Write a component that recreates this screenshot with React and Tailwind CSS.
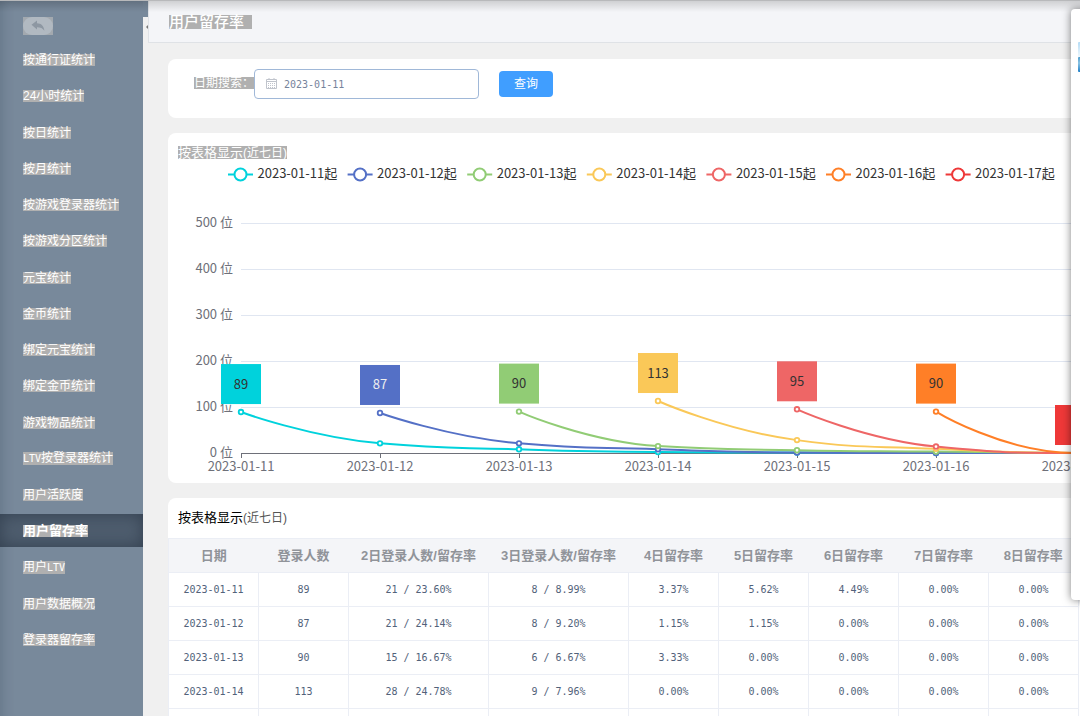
import React from "react";

const SONG = "font-['Liberation_Sans','Noto_Sans_CJK_SC',sans-serif]";
const HEI = "font-['Noto_Sans_CJK_SC',sans-serif]";

const MENU = [
  "按通行证统计",
  "24小时统计",
  "按日统计",
  "按月统计",
  "按游戏登录器统计",
  "按游戏分区统计",
  "元宝统计",
  "金币统计",
  "绑定元宝统计",
  "绑定金币统计",
  "游戏物品统计",
  "LTV按登录器统计",
  "用户活跃度",
  "用户留存率",
  "用户LTV",
  "用户数据概况",
  "登录器留存率",
];
const ACTIVE = "用户留存率";

const SERIES = [
  { date: "2023-01-11", color: "#00d2dc", label: "#333333", data: [89, 21, 8, 2, 1, 0, 0] },
  { date: "2023-01-12", color: "#5470c6", label: "#eeeeee", data: [87, 21, 8, 1, 0, 0] },
  { date: "2023-01-13", color: "#91cc75", label: "#333333", data: [90, 15, 6, 3, 0] },
  { date: "2023-01-14", color: "#fac858", label: "#333333", data: [113, 28, 9, 0, 0] },
  { date: "2023-01-15", color: "#ee6666", label: "#333333", data: [95, 14, 0, 0] },
  { date: "2023-01-16", color: "#ff7f27", label: "#333333", data: [90, 0, 0] },
  { date: "2023-01-17", color: "#ee3838", label: "#333333", data: [0] },
];

const COLUMNS = [
  ["日期", "w-[90px]"],
  ["登录人数", "w-[90px]"],
  ["2日登录人数/留存率", "w-[140px]"],
  ["3日登录人数/留存率", "w-[140px]"],
  ["4日留存率", "w-[90px]"],
  ["5日留存率", "w-[90px]"],
  ["6日留存率", "w-[90px]"],
  ["7日留存率", "w-[90px]"],
  ["8日留存率", "w-[90px]"],
];

const ROWS = [
  ["2023-01-11", "89", "21 / 23.60%", "8 / 8.99%", "3.37%", "5.62%", "4.49%", "0.00%", "0.00%"],
  ["2023-01-12", "87", "21 / 24.14%", "8 / 9.20%", "1.15%", "1.15%", "0.00%", "0.00%", "0.00%"],
  ["2023-01-13", "90", "15 / 16.67%", "6 / 6.67%", "3.33%", "0.00%", "0.00%", "0.00%", "0.00%"],
  ["2023-01-14", "113", "28 / 24.78%", "9 / 7.96%", "0.00%", "0.00%", "0.00%", "0.00%", "0.00%"],
  ["", "", "", "", "", "", "", "", ""],
];

// Chart scales, in the drawing's own units.
const X0 = 73;
const STEP = 139;
const Y0 = 294;
const px = (i) => X0 + i * STEP;
const py = (v) => Y0 - v * 0.46;

const between = (v, a, b) => Math.max(Math.min(v, Math.max(a, b)), Math.min(a, b));

// Smooth bezier through the points, with control points kept inside each segment.
function smoothPath(pts) {
  let d = `M${pts[0][0]},${pts[0][1]}`;
  let c0 = pts[0];
  for (let i = 1; i < pts.length; i++) {
    const p = pts[i - 1];
    const q = pts[i];
    const n = pts[i + 1];
    let c1 = q;
    let next = q;
    if (n) {
      const lp = Math.hypot(q[0] - p[0], q[1] - p[1]);
      const ln = Math.hypot(n[0] - q[0], n[1] - q[1]);
      const r = ln / (ln + lp);
      next = [0, 1].map((k) => between(q[k] + (n[k] - p[k]) * 0.5 * r, n[k], q[k]));
      c1 = [0, 1].map((k) => between(q[k] - ((next[k] - q[k]) * lp) / ln, p[k], q[k]));
      next = [0, 1].map((k) => q[k] + ((q[k] - c1[k]) * ln) / lp);
    }
    d += `C${c0[0]},${c0[1]} ${c1[0]},${c1[1]} ${q[0]},${q[1]}`;
    c0 = next;
  }
  return d;
}

// Latin letters are set smaller, so that two of them take the width of one ideograph.
function Mixed({ text }) {
  return text.split(/([A-Z]+)/).map((part, i) =>
    /[A-Z]/.test(part) ? (
      <span key={i} className="font-['DejaVu_Sans_Mono',monospace] text-[10px]">{part}</span>
    ) : (
      part
    )
  );
}

function Sidebar() {
  return (
    <nav className="w-[143px] shrink-0 overflow-hidden bg-[#78899b] pt-[17px] shadow-[inset_10px_4px_12px_-8px_rgba(40,60,80,0.25)]">
      <button type="button" aria-label="返回" className="ml-[23px] flex h-[18px] w-[30px] bg-[#a3a9af]">
        <span className="flex h-full w-full items-center justify-center rounded-full bg-[#b1b9c1]">
          <svg viewBox="0 0 14 12" className="h-3 w-3.5" fill="#8d97a2">
            <path d="M0.5 4.8 6 0.6v2.7c4.200 0 6.800 2.700 7.400 7.500-1.700-2.500-3.800-3.600-7.400-3.600v2.400z" />
          </svg>
        </span>
      </button>
      <ul className="mt-2 flex h-[613px] flex-col justify-between">
        {MENU.map((m) => (
          <li key={m}>
            <a
              href="#"
              className={
                m === ACTIVE
                  ? "flex h-[33px] items-center bg-[#4e5d6e] pt-px pl-[23px] text-[13px] font-bold text-white shadow-[inset_0_0_16px_rgba(30,40,55,0.55)]"
                  : "flex h-[33px] items-center pt-px pl-[23px] text-xs text-white"
              }
            >
              <span className="bg-[#b0b0b0] leading-3 whitespace-nowrap">
                <Mixed text={m} />
              </span>
            </a>
          </li>
        ))}
      </ul>
    </nav>
  );
}

function Chart() {
  return (
    <svg width="1080" height="324" viewBox="0 0 1080 324" className={`block shrink-0 ${HEI}`} fontSize="13">
      {SERIES.map((s, i) => (
        <g key={s.date}>
          <path d={`M${60 + i * 119.6} 15.500h25`} stroke={s.color} strokeWidth="2" />
          <circle cx={72.5 + i * 119.6} cy="15.500" r="6" fill="#fff" stroke={s.color} strokeWidth="2" />
          <text x={89.5 + i * 119.6} y="19" fill="#333">{s.date}起</text>
        </g>
      ))}
      {[0, 100, 200, 300, 400, 500].map((v) => (
        <g key={v}>
          <path d={`M${X0} ${py(v) + 0.5}H1080`} stroke={v ? "#e0e6f1" : "#6e7079"} />
          <text x="65" y={py(v) + 4} textAnchor="end" fill="#6e7079">{v} 位</text>
        </g>
      ))}
      {SERIES.map((s, i) => (
        <g key={s.date}>
          <path d={`M${px(i) + 0.5} ${Y0}v5`} stroke="#6e7079" />
          <text x={px(i)} y="312" textAnchor="middle" fill="#6e7079">{s.date}</text>
        </g>
      ))}
      {SERIES.map((s, i) => {
        const pts = s.data.map((v, k) => [px(i + k), py(v)]);
        return (
          <g key={s.date}>
            <path d={smoothPath(pts)} fill="none" stroke={s.color} strokeWidth="2" />
            {pts.map(([x, y]) => (
              <circle key={x} cx={x} cy={y} r="2.300" fill="#fff" stroke={s.color} strokeWidth="1.800" />
            ))}
          </g>
        );
      })}
      {SERIES.map((s, i) => (
        <g key={s.date}>
          <rect x={px(i) - 20} y={py(s.data[0]) - 48} width="40" height="40" fill={s.color} />
          <text x={px(i)} y={py(s.data[0]) - 23.5} textAnchor="middle" fill={s.label}>{s.data[0]}</text>
        </g>
      ))}
    </svg>
  );
}

export default function App() {
  return (
    <div className={`relative flex h-screen overflow-hidden bg-[#f0f0f0] text-xs ${SONG}`}>
      <Sidebar />
      <div className="flex w-[5px] shrink-0 flex-col">
        <div className="h-[17px] bg-[#78899b]" />
        <button type="button" aria-label="收起菜单" className="flex h-5 w-full items-center justify-end">
          <svg viewBox="0 0 2 4" className="h-1 w-0.5" fill="#777">
            <path d="M2 0v4L0 2z" />
          </svg>
        </button>
      </div>
      <main className="min-w-0 flex-1 overflow-hidden">
        <header className="flex h-[43px] items-center border-b border-l border-[#dfe2e6] bg-[#f4f5f8] pt-0.5 pl-5">
          <h1 className="bg-[#b0b0b0] pr-2 text-[15px] leading-[14px] font-medium text-white">用户留存率</h1>
        </header>
        <div className="flex flex-col gap-[15px] pt-4 pl-5">
          <section className="flex h-[59px] items-start rounded-l-lg bg-white pt-2.5 pl-[26px]">
            <label htmlFor="day" className="mt-2 bg-[#b0b0b0] leading-3 text-white">日期搜索：</label>
            <div className="relative">
              <input
                id="day"
                type="text"
                defaultValue="2023-01-11"
                className="h-[30px] w-[225px] rounded-sm border border-[#a0b8d8] bg-white pl-[29px] font-['DejaVu_Sans_Mono',monospace] text-[10px] text-[#76839b]"
              />
              <svg viewBox="0 0 12 12" className="pointer-events-none absolute top-[9px] left-3 h-3 w-3" fill="none" stroke="#c0c4cc">
                <path d="M.5 1.500h10v9h-10zM.5 3.500h10M3 0v2M8 0v2" />
                <path d="M2 5.500h7M2 7.500h7M2 9.500h7" strokeDasharray="1 1" />
              </svg>
            </div>
            <button type="button" className="mt-0.5 ml-5 h-[26px] w-[54px] rounded-sm bg-[#409eff] text-white">查询</button>
          </section>

          <section className="h-[350px] overflow-hidden rounded-l-lg bg-white pt-[13px]">
            <h2 className="ml-2.5 flex h-[13px] w-fit items-center bg-[#b0b0b0] text-[13px] leading-[13px] text-white">
              按表格显示<span className="text-xs leading-3">(近七日)</span>
            </h2>
            <Chart />
          </section>

          <section className="overflow-hidden rounded-tl-lg bg-white">
            <h2 className="flex h-10 items-center pl-2.5 text-[13px] text-black">
              按表格显示<span className="text-xs text-[#555]">(近七日)</span>
            </h2>
            <table className="w-[911px] table-fixed border-collapse text-center">
              <thead>
                <tr className="h-[34px] border border-[#ebeef5] bg-[#f4f5f8] text-[13px] text-[#909399]">
                  {COLUMNS.map(([name, width]) => (
                    <th key={name} className={`${width} p-0 font-bold whitespace-nowrap`}>{name}</th>
                  ))}
                </tr>
              </thead>
              <tbody className="font-['DejaVu_Sans_Mono',monospace] text-[10px] text-[#52627a]">
                {ROWS.map((row, r) => (
                  <tr key={r} className="h-[34px]">
                    {row.map((cell, c) => (
                      <td key={c} className="border border-[#ebeef5] p-0 whitespace-nowrap">{cell}</td>
                    ))}
                  </tr>
                ))}
              </tbody>
            </table>
          </section>
        </div>
      </main>

      <div className="pointer-events-none absolute inset-x-0 top-0 h-3 border-t border-[#b8b9bb] bg-linear-to-b from-black/15 to-transparent" />
      <aside className="absolute top-[9px] -right-4 h-[591px] w-[25px] rounded-sm bg-white shadow-[0_0_8px_rgba(0,0,0,0.5)]">
        <svg viewBox="0 0 18 30" className="mt-[33px] ml-[7px] h-[30px] w-[18px]">
          <defs>
            <linearGradient id="sky" x1="0" y1="0" x2="0" y2="1">
              <stop offset="0" stopColor="#b5dcf5" />
              <stop offset="1" stopColor="#f2f9fd" />
            </linearGradient>
            <linearGradient id="sea" x1="0" y1="0" x2="0" y2="1">
              <stop offset="0" stopColor="#4d9ccc" />
              <stop offset="0.4" stopColor="#8cc4e4" />
              <stop offset="1" stopColor="#1f7fc8" />
            </linearGradient>
          </defs>
          <rect width="18" height="16" rx="1" fill="url(#sky)" />
          <rect y="15" width="18" height="15" rx="1" fill="url(#sea)" />
        </svg>
      </aside>
    </div>
  );
}
